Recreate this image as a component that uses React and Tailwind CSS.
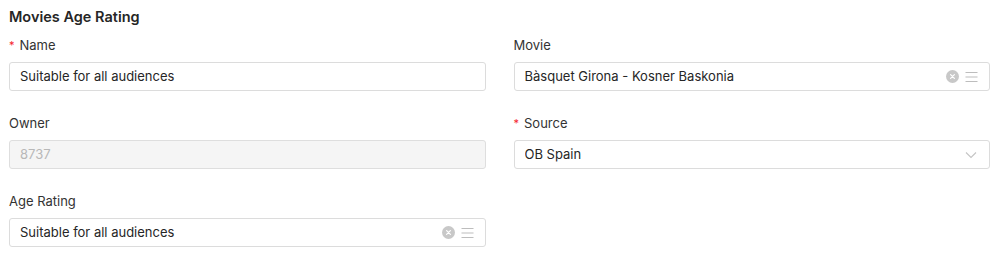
import React from "react";

function ClearIcon() {
  return (
    <svg width="13" height="13" viewBox="0 0 13 13">
      <circle cx="6.5" cy="6.5" r="6.5" fill="#c8c8c8" />
      <path d="M4.6 4.6 L8.4 8.4 M8.4 4.6 L4.6 8.4" stroke="#fff" strokeWidth="1.2" strokeLinecap="round" />
    </svg>
  );
}

function MenuIcon() {
  return (
    <svg width="13" height="12" viewBox="0 0 13 12">
      <path d="M0.5 1.5 H12.5 M0.5 6 H12.5 M0.5 10.5 H12.5" stroke="#bdbdbd" strokeWidth="1.2" />
    </svg>
  );
}

function Chevron() {
  return (
    <svg width="12" height="8" viewBox="0 0 12 8">
      <path d="M1 1.5 L6 6.5 L11 1.5" fill="none" stroke="#c4c4c4" strokeWidth="1.1" />
    </svg>
  );
}

function Label({ children, required }) {
  return (
    <div className="h-5 flex items-center text-[13px] text-[#333333] mb-[7px] pt-[1px]">
      {required && <span className="text-[#f5222d] mr-[5px] text-[11px] leading-none">*</span>}
      {children}
    </div>
  );
}

function Field({ label, required, value, disabled, icons, chevron }) {
  return (
    <div className="flex flex-col">
      <Label required={required}>{label}</Label>
      <div
        className={`h-[29px] border rounded-[3px] flex items-center pl-[10px] pr-[11px] text-[13px] ${
          disabled ? "bg-[#f5f5f5] border-[#dedede] text-[#b8b8b8]" : "bg-white border-[#dcdcdc] text-[#262626]"
        }`}
      >
        <span className="flex-1 truncate">{value}</span>
        {icons && (
          <span className="flex items-center gap-[6px]">
            <ClearIcon />
            <MenuIcon />
          </span>
        )}
        {chevron && (
          <span className="flex items-center pr-[1px]">
            <Chevron />
          </span>
        )}
      </div>
    </div>
  );
}

export default function App() {
  return (
    <div
      className="w-[1000px] h-[255px] bg-white pl-[9px] pr-[10px] pt-[6px]"
      style={{ fontFamily: "Inter, 'Noto Sans', sans-serif" }}
    >
      <div className="text-[14.5px] font-semibold text-[#262626] h-5 flex items-center mb-[9px] pt-[1px]">Movies Age Rating</div>
      <div className="grid grid-cols-2 gap-x-[28px] gap-y-[22px]">
        <Field label="Name" required value="Suitable for all audiences" />
        <Field label="Movie" value="Bàsquet Girona - Kosner Baskonia" icons />
        <Field label="Owner" value="8737" disabled />
        <Field label="Source" required value="OB Spain" chevron />
        <Field label="Age Rating" value="Suitable for all audiences" icons />
      </div>
    </div>
  );
}
